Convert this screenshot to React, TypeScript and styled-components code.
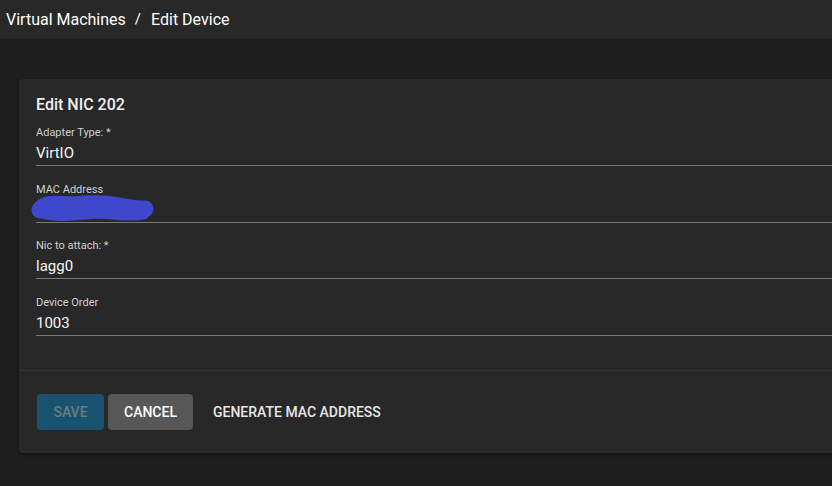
import React from 'react';
import styled, { createGlobalStyle } from 'styled-components';

const GlobalStyle = createGlobalStyle`
  html, body {
    margin: 0;
    padding: 0;
    background: #1e1e1e;
    overflow: hidden;
    font-family: Roboto, "Liberation Sans", sans-serif;
  }
`;

const Page = styled.div`
  width: 832px;
  height: 486px;
  background: #1e1e1e;
  overflow: hidden;
`;

const TopBar = styled.div`
  height: 39px;
  background: #282828;
  display: flex;
  align-items: center;
  padding-left: 6px;
  color: #ffffff;
  font-size: 16px;
  box-sizing: border-box;
  padding-bottom: 1px;
`;

const Crumb = styled.span`
  white-space: nowrap;
`;

const Separator = styled.span`
  margin: 0 10px 0 9px;
  font-size: 15px;
`;

const Content = styled.div`
  padding: 40px 0 0 19px;
`;

const FormCard = styled.div`
  width: 860px;
  background: #282828;
  border-radius: 4px;
  box-shadow: 0 2px 3px rgba(0, 0, 0, 0.35);
  display: flex;
  flex-direction: column;
`;

const Fields = styled.div`
  padding: 16px 0 34px 17px;
`;

const CardTitle = styled.h3`
  margin: 0 0 9px 0;
  font-size: 16px;
  font-weight: 500;
  color: #f0f0f0;
  line-height: 20px;
`;

const Field = styled.div`
  display: flex;
  flex-direction: column;
  border-bottom: 1px solid #7a7a7a;
  height: 39px;
  padding-top: 2px;
  margin-bottom: 14.67px;
  &:last-child {
    margin-bottom: 0;
  }
`;

const FieldLabel = styled.label`
  font-size: 11px;
  color: #d0d0d0;
  line-height: 13px;
  margin-bottom: 4px;
`;

const FieldValue = styled.div`
  font-size: 15px;
  color: #f5f5f5;
  line-height: 20px;
  position: relative;
`;

const Redaction = styled.svg`
  position: absolute;
  left: -6px;
  top: -6px;
`;

const Divider = styled.div`
  height: 1px;
  background: #353535;
`;

const Actions = styled.div`
  display: flex;
  align-items: center;
  gap: 4px;
  padding: 23px 0 23px 18px;
`;

const ActionButton = styled.button<{ $variant: 'primary' | 'default' | 'text' }>`
  height: 36px;
  padding: 0 16px;
  border: none;
  border-radius: 4px;
  font-family: Roboto, "Liberation Sans", sans-serif;
  font-size: 14px;
  font-weight: 500;
  letter-spacing: 0;
  cursor: pointer;
  background: ${(p) =>
    p.$variant === 'primary' ? '#19526f' : p.$variant === 'default' ? '#575757' : 'transparent'};
  color: ${(p) => (p.$variant === 'primary' ? '#6b7b82' : p.$variant === 'default' ? '#ffffff' : '#e6e6e6')};
  min-width: ${(p) => (p.$variant === 'primary' ? '67px' : 'auto')};
`;

const fields = [
  { label: 'Adapter Type: *', value: 'VirtIO' },
  { label: 'MAC Address', value: '' },
  { label: 'Nic to attach: *', value: 'lagg0' },
  { label: 'Device Order', value: '1003' },
];

const App: React.FC = () => {
  return (
    <>
      <GlobalStyle />
      <Page>
        <TopBar>
          <Crumb>Virtual Machines</Crumb>
          <Separator>/</Separator>
          <Crumb>Edit Device</Crumb>
        </TopBar>
        <Content>
          <FormCard>
            <Fields>
              <CardTitle>Edit NIC 202</CardTitle>
              {fields.map((f) => (
                <Field key={f.label}>
                  <FieldLabel>{f.label}</FieldLabel>
                  <FieldValue>
                    {f.value || '\u00a0'}
                    {f.label === 'MAC Address' && (
                      <Redaction width="126" height="32" viewBox="0 0 126 32">
                        <path
                          d="M10 16 C 16 7, 30 11, 44 11 C 60 9, 74 9, 90 12 C 100 14, 108 15, 115 15"
                          stroke="#3f48cc"
                          strokeWidth="17"
                          strokeLinecap="round"
                          fill="none"
                        />
                        <path
                          d="M12 18 C 30 23, 50 19, 68 18 C 88 19, 102 22, 113 19"
                          stroke="#3f48cc"
                          strokeWidth="13"
                          strokeLinecap="round"
                          fill="none"
                        />
                      </Redaction>
                    )}
                  </FieldValue>
                </Field>
              ))}
            </Fields>
            <Divider />
            <Actions>
              <ActionButton $variant="primary">SAVE</ActionButton>
              <ActionButton $variant="default">CANCEL</ActionButton>
              <ActionButton $variant="text">GENERATE MAC ADDRESS</ActionButton>
            </Actions>
          </FormCard>
        </Content>
      </Page>
    </>
  );
};

export default App;
